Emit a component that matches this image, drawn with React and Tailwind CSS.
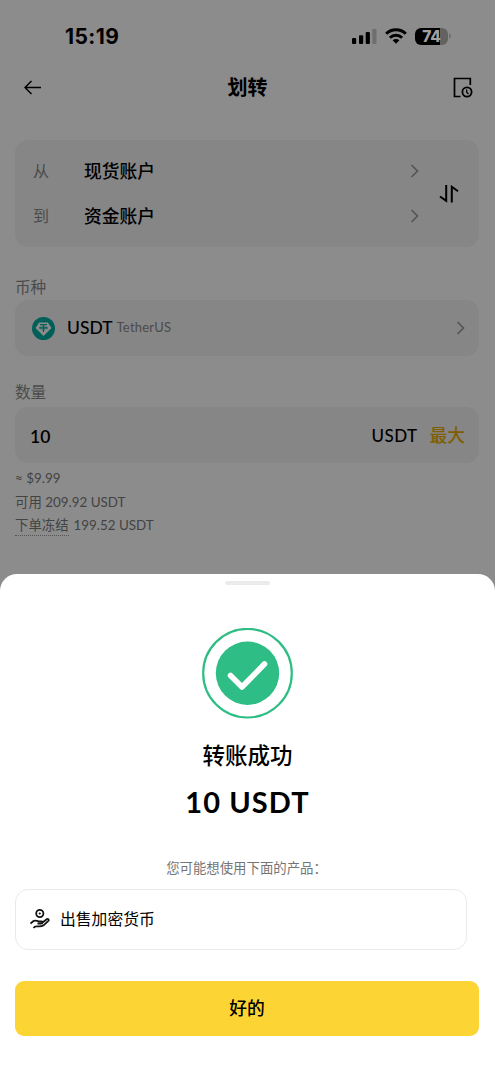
import React from "react";

function StatusBar() {
  return (
    <div className="flex h-[72px] items-center justify-between pr-[45px] pl-[65px]">
      <span className="w-[60px] pt-[1px] font-['Inter'] text-[21px] leading-[24px] font-bold tracking-[0.400px] whitespace-nowrap">15:19</span>
      <div className="flex items-center">
        <svg width="25" height="16" viewBox="0 0 25 16">
          <rect x="0" y="10" width="4.2" height="6" rx="1" />
          <rect x="7" y="7.3" width="4.2" height="8.7" rx="1" />
          <rect x="13.7" y="4" width="4.2" height="12" rx="1" />
          <rect x="20.3" y="1" width="4.2" height="15" rx="1" fill="#6f6f6f" />
        </svg>
        <svg className="ml-[8px]" width="22" height="16" viewBox="0 0 22 16" fill="none" stroke="#000" strokeWidth="3">
          <path d="M1.2 5.8C6.5.5 15.500.5 20.800 5.800" />
          <path d="M4.900 9.700C8.300 6.300 13.700 6.300 17.100 9.700" />
          <path d="M7.600 12.200C9.500 10.500 12.500 10.500 14.400 12.200L11 15.700Z" fill="#000" stroke="none" />
        </svg>
        <div className="ml-[8px] flex h-[17px] w-[33px] items-center justify-center overflow-hidden rounded-[6px] bg-[linear-gradient(to_right,#000_75%,#626262_75%)] font-['Inter'] text-[15.500px] leading-[17px] font-extrabold tracking-[-0.3px] text-[#a0a0a0]">74</div>
        <svg className="-mr-[1px] ml-[1px]" width="2" height="6" viewBox="0 0 2 6"><path d="M0 0Q2 1 2 3T0 6Z" fill="#6f6f6f" /></svg>
      </div>
    </div>
  );
}

function Chevron() {
  return (
    <svg width="10" height="15" viewBox="0 0 10 15" fill="none" stroke="#555" strokeWidth="1.700">
      <path d="M1.500 1L7.500 7L1.500 13" />
    </svg>
  );
}

function AccountRow({ label, name }) {
  return (
    <div className="flex h-[45px] items-center">
      <span className="w-[51px] text-[16px] text-[#4b4b4b]">{label}</span>
      <span className="flex-1 pt-[1px] text-[17.800px] font-medium">{name}</span>
      <Chevron />
    </div>
  );
}

function TetherLogo() {
  return (
    <svg width="23" height="23" viewBox="0 0 23 23">
      <circle cx="11.500" cy="11.500" r="11.500" fill="#005f59" />
      <path d="M7.200 5.500H15.800L19.500 11L11.500 19L3.500 11Z" fill="#8c8c8c" />
      <path d="M8 7.700H15M11.500 7.700V15M7.500 10.800H15.500" fill="none" stroke="#005f59" strokeWidth="1.300" />
      <ellipse cx="11.500" cy="10.900" rx="4.200" ry="1.100" fill="none" stroke="#005f59" strokeWidth="0.600" />
    </svg>
  );
}

export default function App() {
  return (
    <div className="flex h-[1080px] w-[495px] flex-col overflow-hidden bg-[#8c8c8c] font-[Lato,'Noto_Sans_CJK_SC',sans-serif] leading-none text-black">
      <div className="h-[574px] shrink-0">
        <StatusBar />
        <header className="flex h-[31px] items-center justify-between pr-[22px] pl-[24px]">
          <svg width="18" height="16" viewBox="0 0 18 16" fill="none" stroke="#000" strokeWidth="1.500">
            <path d="M17 7.500H1M7.500 1L1 7.500L7.500 14" />
          </svg>
          <h1 className="-mt-[1px] text-[20px] font-bold">划转</h1>
          <svg width="20" height="21" viewBox="0 0 20 21" fill="none" stroke="#000" strokeWidth="1.700">
            <path d="M17.300 8V1.500H1.500V19.500H7.500" />
            <circle cx="14" cy="15" r="4.600" strokeWidth="1.800" />
            <path d="M13.700 12.500V15.300L15.500 17" strokeWidth="1.300" />
          </svg>
        </header>

        <section className="mr-[16px] ml-[15px] mt-[37px] flex h-[107px] items-center rounded-[13px] bg-[#868686] pl-[18px]">
          <div className="w-[387px]">
            <AccountRow label="从" name="现货账户" />
            <AccountRow label="到" name="资金账户" />
          </div>
          <svg className="ml-[19px] shrink-0" width="20" height="18" viewBox="0 0 20 18" fill="none" stroke="#000" strokeWidth="2">
            <path d="M7.200 0V15.900L1 11.500M12.800 17.500V1.800L19 6.200" />
          </svg>
        </section>

        <div className="mt-[31px] ml-[15px] h-[22px] text-[15.600px] leading-[18px] text-[#4b4b4b]">币种</div>
        <section className="mr-[16px] ml-[15px] flex h-[56px] items-center rounded-[13px] bg-[#868686] pr-[13px] pl-[17px]">
          <TetherLogo />
          <span className="-mt-[1px] ml-[12px] text-[17.500px] font-medium">USDT</span>
          <span className="-mt-[1px] ml-[4px] flex-1 text-[13px] tracking-[0.200px] text-[#4b4b4b]">TetherUS</span>
          <Chevron />
        </section>

        <div className="mt-[27px] ml-[15px] h-[24px] text-[15.600px] leading-[18px] text-[#4b4b4b]">数量</div>
        <section className="mr-[16px] ml-[15px] flex h-[56px] items-center rounded-[13px] bg-[#868686] pr-[14px] pl-[15px]">
          <span className="flex-1 pt-[3px] text-[17.500px] font-semibold">10</span>
          <span className="text-[17px] font-medium tracking-[0.400px]">USDT</span>
          <span className="ml-[12px] pt-[1px] text-[17.800px] font-medium text-[#805f04]">最大</span>
        </section>
        <div className="ml-[15px] pt-[4px] text-[13.400px] leading-[23.700px] text-[#434343]">
          <div>≈ $9.99</div>
          <div>可用 209.92 USDT</div>
          <div className="flex items-center"><span className="mr-[5px] h-[19px] border-b border-dotted border-[#555] leading-[17px]">下单冻结</span>199.52 USDT</div>
        </div>
      </div>

      <main className="flex flex-1 flex-col items-center rounded-t-[17px] bg-white">
        <div className="mt-[7px] h-[4px] w-[45px] rounded-[2px] bg-[#ebebeb]" />
        <svg className="mt-[43px]" width="91" height="91" viewBox="0 0 91 91" fill="none">
          <circle cx="45.500" cy="45.200" r="44.300" stroke="#2ebd85" strokeWidth="2.200" />
          <circle cx="45.500" cy="45.200" r="31.700" fill="#2ebd85" />
          <path d="M28.500 47.500L40 59L62.500 36" stroke="#fff" strokeWidth="5.600" strokeLinecap="round" strokeLinejoin="round" />
        </svg>
        <h2 className="mt-[24px] text-[22.500px] leading-[26px] font-medium">转账成功</h2>
        <div className="mt-[16px] text-[29px] leading-[34px] font-bold tracking-[1.100px]">10 USDT</div>
        <p className="mt-[39px] mr-[2px] text-[13.400px] leading-[20px] text-[#757575]">您可能想使用下面的产品：</p>
        <div className="mt-[11px] mr-[13px] flex h-[61px] w-[452px] items-center rounded-[13px] border border-[#eaeaea] pl-[14px]">
          <svg className="-mt-[1px]" width="20" height="20" viewBox="0 0 20 20" fill="none" stroke="#111" strokeWidth="1.800" strokeLinejoin="round">
            <circle cx="9.800" cy="4.500" r="3.600" />
            <path d="M9.800 3.200L11.100 4.500L9.800 5.800L8.500 4.500Z" fill="#111" stroke="none" />
            <path d="M.5 14.500L3.500 12C5.500 10.600 7 12.400 9 12.300H11.500C13 12.300 12.700 14.500 11.200 14.500H7.500M12.500 13.500L16.700 10.200C18 9.300 19.500 10.800 18.400 11.900L13.500 16.300C11.500 17.900 9 17.300 6.500 17.300C5 17.300 4 18.200 3.500 19" />
          </svg>
          <span className="-mt-[1px] ml-[10px] text-[15.800px]">出售加密货币</span>
        </div>
        <button className="mt-[31px] mr-[1px] h-[55px] w-[464px] rounded-[9px] bg-[#fcd535] text-[17.800px] font-medium">好的</button>
      </main>
    </div>
  );
}
